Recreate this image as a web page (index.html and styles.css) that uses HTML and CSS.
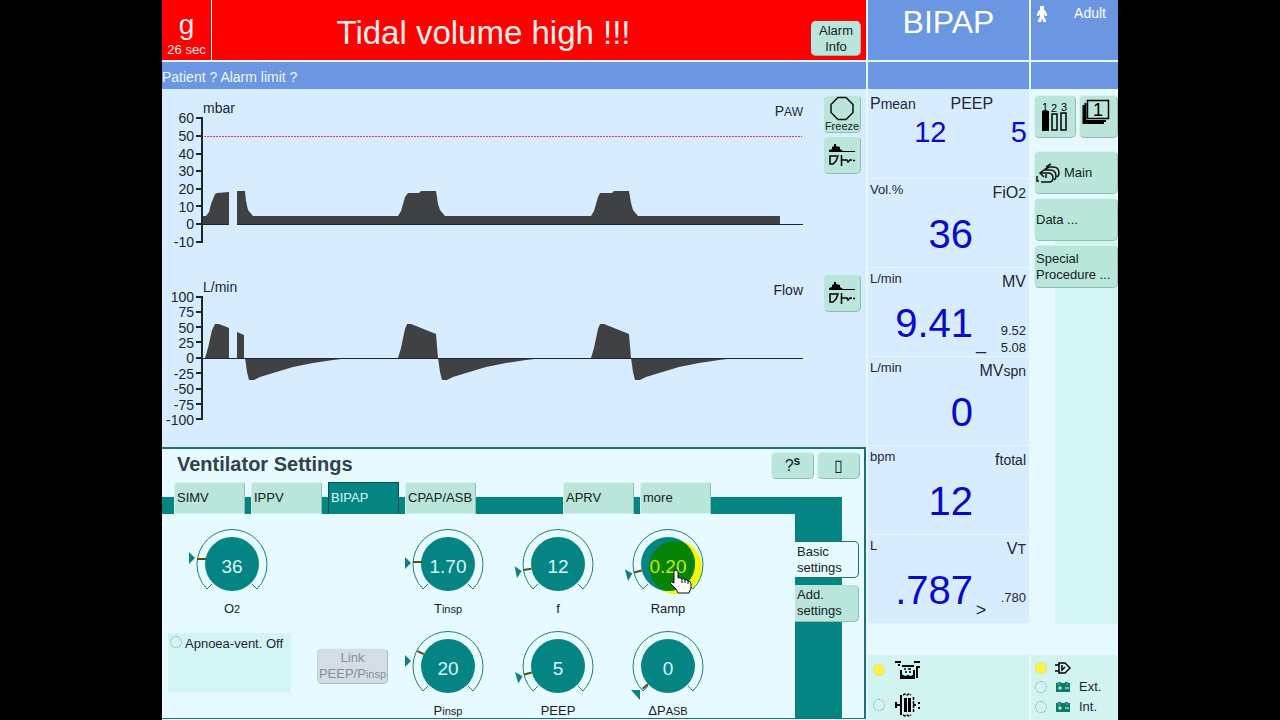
FILE: index.html
```
<!DOCTYPE html>
<html lang="en">
<head>
    <meta charset="UTF-8">
    <title>Ventilator</title>
    <link rel="stylesheet" href="styles.css">
</head>
<body>
    <!-- shared shapes -->
    <svg class="defs" width="0" height="0" aria-hidden="true">
        <symbol id="dial" viewBox="-45 -38 90 76">
            <path d="M-20 20L-25 25A35 35 0 1 1 25 25L20 20" fill="none" stroke="#1f7d7d"/>
            <circle r="27" fill="#048583"/>
        </symbol>
        <symbol id="curves" viewBox="0 0 28 26">
            <path d="M1 10V8l3-1V5l2-1V2h2v2l4 1v2l3 2v1z" fill="#000"/>
            <path d="M1 9.500h26" stroke="#000"/>
            <path d="M2 14h8l-2 5-3 3H2zM13.500 13v11M14 18h5l1 2 2-2h2M25 18.500h2" fill="none" stroke="#000" stroke-width="1.500"/>
        </symbol>
        <symbol id="battery" viewBox="0 0 16 12">
            <path d="M1 2h2V1h3v1h4V1h3v1h2v9H1z" fill="#0d7a6b"/>
            <path d="M3 7h4M5 5v4M10 7h4" stroke="#e0fff8"/>
            <path d="M3 3h2M11 3h2" stroke="#7fc5b8"/>
        </symbol>
    </svg>

    <div class="screen">
        <div class="main">
            <header class="alarm">
                <div class="timer">
                    <span class="timer-sign">g</span>
                    <span class="timer-text">26 sec</span>
                </div>
                <h1 class="message">Tidal volume high !!!</h1>
                <button class="btn alarm-info">Alarm<br>Info</button>
            </header>
            <div class="hint">Patient ? Alarm limit ?</div>

            <section class="charts">
                <div class="chart">
                    <svg class="plot" viewBox="0 0 650 179">
                        <g class="scale">
                            <text x="32" y="34">60</text>
                            <text x="32" y="52">50</text>
                            <text x="32" y="70">40</text>
                            <text x="32" y="87">30</text>
                            <text x="32" y="105">20</text>
                            <text x="32" y="123">10</text>
                            <text x="32" y="140">0</text>
                            <text x="32" y="158">-10</text>
                        </g>
                        <text class="unit" x="41" y="24">mbar</text>
                        <text class="name" x="641" y="27">P<tspan class="small">AW</tspan></text>
                        <path class="axis" d="M34 29h6v124h-6M34 47h6M34 65h6M34 82h6M34 100h6M34 117h6M34 135h6"/>
                        <path class="limit" d="M42 47.500H640"/>
                        <path class="wave" d="M41 135V127H44L47 123L49 115L53 105L55 104L67 103V135zM75 135V102H83L84 112L86 121L91 127H236L239 122L243 108L246 104H257L259 102H274L276 115L278 121L283 127H429L432 122L436 108L438 104H450L452 102H467L469 114L471 121L476 127H618V135z"/>
                        <path class="zero" d="M41 135.500H67M75 135.500H641"/>
                    </svg>
                    <div class="tools">
                        <button class="btn tool freeze">
                            <svg width="26" height="25" viewBox="0 0 26 25"><path d="M9 1.500h8l7 7v8l-7 7H9l-7-7v-8z" fill="none" stroke="#111" stroke-width="1.500"/></svg>
                            Freeze
                        </button>
                        <button class="btn tool" aria-label="Pressure curve"><svg width="28" height="26"><use href="#curves"/></svg></button>
                    </div>
                </div>
                <div class="chart">
                    <svg class="plot" viewBox="0 0 650 179">
                        <g class="scale">
                            <text x="32" y="34">100</text>
                            <text x="32" y="49">75</text>
                            <text x="32" y="65">50</text>
                            <text x="32" y="80">25</text>
                            <text x="32" y="95">0</text>
                            <text x="32" y="111">-25</text>
                            <text x="32" y="126">-50</text>
                            <text x="32" y="142">-75</text>
                            <text x="32" y="157">-100</text>
                        </g>
                        <text class="unit" x="41" y="24">L/min</text>
                        <text class="name" x="641" y="27">Flow</text>
                        <path class="axis" d="M34 29h6v122h-6M34 44h6M34 59h6M34 74h6M34 90h6M34 105h6M34 121h6M34 136h6"/>
                        <path class="wave" d="M43 90L46 80L50 62L53 56H57L67 60V90zM75 90V64L82 67V90z"/>
                        <path class="wave" d="M83 90L85 104L87 112H92L98 109L111 105L131 99L151 95L171 92L188 90z"/>
                        <path class="wave" d="M236 90L239 80L243 61L245 56H249L274 66L276 90L278 104L280 112H285L291 109L304 105L324 99L344 95L364 92L381 90z"/>
                        <path class="wave" d="M429 90L432 80L436 61L438 56H442L467 66L469 90L471 104L473 112H478L484 109L497 105L517 99L537 95L557 92L574 90z"/>
                        <path class="zero" d="M41 90.500H641"/>
                    </svg>
                    <div class="tools">
                        <button class="btn tool" aria-label="Flow curve"><svg width="28" height="26"><use href="#curves"/></svg></button>
                    </div>
                </div>
            </section>

            <section class="settings">
                <div class="settings-head">
                    <h2>Ventilator Settings</h2>
                    <button class="btn head-btn">?<sup>s</sup></button>
                    <button class="btn head-btn">▯</button>
                </div>
                <nav class="tabs">
                    <button class="tab">SIMV</button>
                    <button class="tab">IPPV</button>
                    <button class="tab active">BIPAP</button>
                    <button class="tab">CPAP/ASB</button>
                    <button class="tab after-space">APRV</button>
                    <button class="tab">more</button>
                </nav>
                <div class="settings-body">
                    <div class="knobs">
                        <button class="knob">
                            <svg viewBox="-45 -38 90 76">
                                <use href="#dial" x="-45" y="-38" width="90" height="76"/>
                                <path class="tick" d="M-35-5h9"/>
                                <path class="pointer" d="M-43-12l6 6l-6 6z"/>
                                <text y="9">36</text>
                            </svg>
                            <span>O<small>2</small></span>
                        </button>
                        <button class="knob col-3">
                            <svg viewBox="-45 -38 90 76">
                                <use href="#dial" x="-45" y="-38" width="90" height="76"/>
                                <path class="tick" d="M-35-2h9"/>
                                <path class="pointer" d="M-43-7l6 6l-6 6z"/>
                                <text y="9">1.70</text>
                            </svg>
                            <span>T<small>insp</small></span>
                        </button>
                        <button class="knob">
                            <svg viewBox="-45 -38 90 76">
                                <use href="#dial" x="-45" y="-38" width="90" height="76"/>
                                <path class="tick" d="M-35 0h8" transform="rotate(-10)"/>
                                <path class="pointer" d="M-43-6l6 6l-6 6z" transform="rotate(-11)"/>
                                <text y="9">12</text>
                            </svg>
                            <span>f</span>
                        </button>
                        <button class="knob">
                            <svg viewBox="-45 -38 90 76">
                                <clipPath id="disc"><circle r="27"/></clipPath>
                                <circle cx="7" cy="3" r="27" fill="#f4f800"/>
                                <use href="#dial" x="-45" y="-38" width="90" height="76"/>
                                <circle cx="7" cy="3" r="26" fill="#078407" clip-path="url(#disc)"/>
                                <path class="tick" d="M-35 0h8" transform="rotate(-14)"/>
                                <path class="pointer" d="M-43-6l6 6l-6 6z" transform="rotate(-15)"/>
                                <text class="lit" y="9">0.20</text>
                                <path class="hand" d="M6 7q2-2 4 0v7q2-1 4 1q2-1 3 1q2-1 3 1q3 0 3 3v4l-2 5H10l-2-4l-6-6q1-2 4 0z"/>
                                <path d="M14 15v4M17 16v3M20 17v3" stroke="#111"/>
                            </svg>
                            <span>Ramp</span>
                        </button>

                        <div class="apnoea">
                            <input type="radio" id="apnoea" class="lamp">
                            <label for="apnoea">Apnoea-vent. Off</label>
                        </div>
                        <button class="btn link" disabled>Link<br>PEEP/P<small>insp</small></button>
                        <button class="knob">
                            <svg viewBox="-45 -38 90 76">
                                <use href="#dial" x="-45" y="-38" width="90" height="76"/>
                                <path class="tick" d="M-34 0h7" transform="rotate(26)"/>
                                <path class="pointer" d="M-43-11l6 6l-6 6z"/>
                                <text y="9">20</text>
                            </svg>
                            <span>P<small>insp</small></span>
                        </button>
                        <button class="knob">
                            <svg viewBox="-45 -38 90 76">
                                <use href="#dial" x="-45" y="-38" width="90" height="76"/>
                                <path class="tick" d="M-35 0h8" transform="rotate(-14)"/>
                                <path class="pointer" d="M-43-6l6 6l-6 6z" transform="rotate(-16)"/>
                                <text y="9">5</text>
                            </svg>
                            <span>PEEP</span>
                        </button>
                        <button class="knob">
                            <svg viewBox="-45 -38 90 76">
                                <use href="#dial" x="-45" y="-38" width="90" height="76"/>
                                <path class="tick" d="M-34 0h7" transform="rotate(-42)"/>
                                <path class="pointer" d="M-37 24h9v10z"/>
                                <text y="9">0</text>
                            </svg>
                            <span>ΔP<small>ASB</small></span>
                        </button>
                    </div>
                    <div class="side-tabs">
                        <button class="side-tab active">Basic<br>settings</button>
                        <button class="side-tab">Add.<br>settings</button>
                    </div>
                </div>
            </section>
        </div>

        <div class="values">
            <div class="mode">BIPAP</div>
            <div class="strip"></div>
            <div class="pair">
                <div><span class="pair-name">P<small>mean</small></span><b>12</b></div>
                <div><span class="pair-name">PEEP</span><b class="last">5</b></div>
            </div>
            <div class="value">
                <div class="value-head"><span>Vol.%</span><em>FiO<small>2</small></em></div>
                <div class="value-row"><b>36</b><span class="mark"></span><span class="limits"></span></div>
            </div>
            <div class="value">
                <div class="value-head"><span>L/min</span><em>MV</em></div>
                <div class="value-row"><b>9.41</b><span class="mark">_</span><span class="limits">9.52<br>5.08</span></div>
            </div>
            <div class="value">
                <div class="value-head"><span>L/min</span><em>MV<small>spn</small></em></div>
                <div class="value-row"><b>0</b><span class="mark"></span><span class="limits"></span></div>
            </div>
            <div class="value">
                <div class="value-head"><span>bpm</span><em>f<small>total</small></em></div>
                <div class="value-row"><b>12</b><span class="mark"></span><span class="limits"></span></div>
            </div>
            <div class="value">
                <div class="value-head"><span>L</span><em>V<small>T</small></em></div>
                <div class="value-row"><b>.787</b><span class="mark">&gt;</span><span class="limits">.780</span></div>
            </div>
            <div class="status modules">
                <div class="status-row">
                    <i class="lamp on"></i>
                    <svg width="28" height="20" viewBox="0 0 28 20">
                        <path d="M1 2h6M20 2h6M4 5h2M23 18V7h3M8 6h12M7 10v8h13v-8" fill="none" stroke="#000" stroke-width="2"/>
                        <path d="M7 18h13v-4l-3 2l-3-1l-3 1l-4-2z"/>
                        <path d="M10 9h2M14 9h3M11 12h2M15 12h2" stroke="#000" stroke-width="1.500"/>
                    </svg>
                </div>
                <div class="status-row">
                    <i class="lamp"></i>
                    <svg width="28" height="24" viewBox="0 0 28 24">
                        <path d="M2 9v6M3 12h4M7 2v6M7 8v8M7 16v6M19 12h3M25 9v2M25 14v2" fill="none" stroke="#000" stroke-width="2"/>
                        <path d="M10 5h3v14h-3zM14 5h3v14h-3z"/>
                        <path d="M9 2l2-1l2 1l2-1l2 1M9 22l2 1l2-1l2 1l2-1M19.500 4v16" fill="none" stroke="#000" stroke-width="1.500" stroke-dasharray="3 1"/>
                    </svg>
                </div>
            </div>
        </div>

        <aside class="side">
            <div class="patient">
                <svg width="12" height="18" viewBox="0 0 12 18"><path d="M4 1h4v4h1l2 4v2H9l-1-2v3l2 3v2H7l-1-4-1 4H2v-2l2-3V9l-1 2H1V9l2-4h1z" fill="#fff"/></svg>
                <span>Adult</span>
            </div>
            <div class="strip"></div>
            <div class="menu">
                <div class="menu-top">
                    <button class="btn icon-btn" aria-label="Pages 1 2 3">
                        <svg width="28" height="30" viewBox="0 0 28 30">
                            <text x="1" y="9">1</text><text x="10" y="10">2</text><text x="20" y="9">3</text>
                            <path d="M1 9h7v20H1z"/>
                            <path d="M11 12h5v16h-5zM20 11h5v17h-5z" fill="none" stroke="#000" stroke-width="1.500"/>
                        </svg>
                    </button>
                    <button class="btn icon-btn page-btn" aria-label="Page">
                        <svg width="28" height="26" viewBox="0 0 28 26">
                            <path d="M5.500 1.500h21v18h-21z" fill="none" stroke="#000" stroke-width="1.500"/>
                            <path d="M3.500 4v18H24M1.500 6v18H22" fill="none" stroke="#000" stroke-width="2"/>
                            <text class="page-no" x="16" y="17">1</text>
                        </svg>
                    </button>
                </div>
                <button class="btn menu-btn">
                    <svg width="25" height="22" viewBox="0 0 25 22">
                        <path d="M1 14v5h2M5 20h8q4 0 4-4q0-5-5-5H5M8 8l-4 3l4 4M9 8h5q6 0 6 6q0 3-2 4M13 5L8 8M11 5h6q6 0 6 6q0 3-2 4M15 2l-5 3M10 12v4" fill="none" stroke="#111" stroke-width="1.500"/>
                    </svg>
                    Main
                </button>
                <button class="btn menu-btn">Data ...</button>
                <button class="btn menu-btn">Special<br>Procedure ...</button>
            </div>
            <div class="status power">
                <div class="status-row"><i class="lamp on"></i>
                    <svg width="16" height="12" viewBox="0 0 16 12"><path d="M0 3h4M0 9h4M4 1h6l5 5-5 5H4zM7 3v5l3-3" fill="none" stroke="#000" stroke-width="1.500"/></svg>
                </div>
                <div class="status-row"><i class="lamp"></i><svg width="16" height="12"><use href="#battery"/></svg><span>Ext.</span></div>
                <div class="status-row"><i class="lamp"></i><svg width="16" height="12"><use href="#battery"/></svg><span>Int.</span></div>
            </div>
        </aside>
    </div>
</body>
</html>
```
FILE: styles.css
```
*{
    box-sizing: border-box;
}
body{
    margin: 0;
    padding: 0 162px;
    background: #000;
    color: #1c2733;
    font-family: "Liberation Sans", Arial, sans-serif;
    font-size: 13px;
    line-height: 16px;
}
button{
    margin: 0;
    padding: 0;
    border: 0;
    background: none;
    color: #14211f;
    font: inherit;
}
h1, h2{
    margin: 0;
}
.defs{
    position: absolute;
}
.screen{
    display: grid;
    grid-template-columns: minmax(0, 1fr) 161px 87px;
    column-gap: 2px;
    min-height: 100vh;
    background: #e6f9ff;
}
.main, .values, .side{
    display: flex;
    flex-direction: column;
}
.btn{
    background: #b9e5da;
    border: 1px solid #d4f3ec;
    border-right-color: #8fbdb4;
    border-bottom-color: #8fbdb4;
    border-radius: 5px;
}

/* top line */
.alarm{
    display: flex;
    height: 60px;
    background: #fe0000;
    color: #ffeeea;
}
.timer{
    display: flex;
    flex-direction: column;
    align-items: center;
    justify-content: flex-end;
    width: 50px;
    padding-bottom: 2px;
    border-right: 1px solid #fff;
}
.timer-sign{
    font-size: 28px;
    line-height: 34px;
}
.message{
    flex: 1;
    padding: 14px 56px 0 0;
    font-size: 33px;
    font-weight: normal;
    line-height: 38px;
    text-align: center;
}
.alarm-info{
    width: 50px;
    height: 35px;
    margin: 21px 5px 0 0;
}
.hint, .strip{
    height: 27px;
    margin-top: 2px;
    background: #6a96e2;
}
.hint{
    color: #eef6ff;
    font-size: 14px;
    line-height: 31px;
}
.mode, .patient{
    height: 60px;
    background: #6a96e2;
    color: #fff;
}
.mode{
    font-size: 32px;
    line-height: 44px;
    text-align: center;
}
.patient{
    display: flex;
    align-items: flex-start;
    justify-content: space-between;
    padding: 5px 12px 0 5px;
    font-size: 14px;
}

/* curves */
.charts{
    flex: 1;
    background: #d8ecff;
}
.chart{
    display: flex;
    justify-content: space-between;
    height: 179px;
}
.plot{
    flex: 0 1 650px;
    min-width: 0;
}
.plot text{
    fill: #1c2733;
    font-size: 14px;
}
.plot .scale, .plot .name{
    text-anchor: end;
}
.plot .small{
    font-size: 12px;
}
.axis{
    fill: none;
    stroke: #1c2733;
    stroke-width: 2;
}
.limit{
    stroke: #dc3c5a;
    stroke-dasharray: 2 1;
}
.wave{
    fill: #3f4143;
}
.zero{
    stroke: #1c2733;
}
.tools{
    display: flex;
    flex-direction: column;
    gap: 3px;
    padding: 6px 5px 0 0;
}
.tool{
    display: flex;
    align-items: center;
    justify-content: center;
    width: 38px;
    height: 38px;
}
.freeze{
    flex-direction: column;
    font-size: 11px;
    line-height: 11px;
}

/* settings */
.settings{
    margin-bottom: 1px;
    border: 1px solid #206f72;
    border-width: 2px 2px 1px 0;
    background: #e6faff;
}
.settings-head{
    display: flex;
    gap: 3px;
    height: 33px;
    padding: 3px 4px 0 15px;
}
.settings-head h2{
    flex: 1;
    color: #33424a;
    font-size: 20px;
    line-height: 24px;
}
.head-btn{
    width: 43px;
    height: 27px;
    font-size: 16px;
}
.head-btn sup{
    font-size: 12px;
    font-weight: bold;
    line-height: 1px;
}
.tabs{
    display: flex;
    gap: 6px;
    margin-right: 22px;
    padding-left: 12px;
    background: linear-gradient(transparent 15px, #048583 15px);
}
.tab{
    width: 71px;
    height: 32px;
    padding-left: 2px;
    border: 1px solid #d4f3ec;
    border-right-color: #8fbdb4;
    border-radius: 3px 3px 0 0;
    background: #b9e5da;
    text-align: left;
}
.tab.active{
    border: 1px solid #0a4f50;
    border-bottom-color: #048583;
    border-radius: 0;
    background: #048583;
    color: #d8fff8;
}
.after-space{
    margin-left: 81px;
}
.settings-body{
    display: grid;
    grid-template-columns: minmax(0, 1fr) 69px;
}
.knobs{
    display: grid;
    grid-template-columns: 140px 91px 110px 110px 110px;
    row-gap: 12px;
    padding-top: 12px;
}
.knob{
    display: flex;
    flex-direction: column;
    align-items: center;
    line-height: 14px;
}
.col-3{
    grid-column: 3;
}
.knob svg{
    width: 90px;
    height: 76px;
}
.knob text{
    fill: #d8f6f4;
    font-size: 19px;
    text-anchor: middle;
}
.knob .lit{
    fill: #b9ee00;
}
.tick{
    stroke: #57500a;
    stroke-width: 2;
}
.pointer{
    fill: #107f80;
}
.hand{
    fill: #fff;
    stroke: #111;
}
small{
    font-size: 11px;
}
.apnoea{
    display: flex;
    align-items: flex-start;
    gap: 3px;
    height: 59px;
    margin: 5px 11px 0 6px;
    padding: 3px 0 0 2px;
    background: #d2f4f2;
    white-space: nowrap;
}
.lamp{
    appearance: none;
    flex: none;
    width: 12px;
    height: 12px;
    margin: 0;
    border: 1px dotted #6f9d98;
    border-radius: 50%;
}
.lamp.on{
    border-color: #d8d860;
    background: #fbf24a;
}
.link{
    width: 71px;
    height: 36px;
    margin: 20px 0 0 15px;
    border-color: #e8eef2 #a9b4ba #a9b4ba #c5cfd5;
    background: #d5dde4;
    color: #858e95;
    white-space: nowrap;
}
.side-tabs{
    display: flex;
    flex-direction: column;
    gap: 7px;
    padding-top: 27px;
    background: linear-gradient(to right, #048583 47px, transparent 47px);
}
.side-tab{
    width: 64px;
    height: 37px;
    padding-left: 2px;
    border: 1px solid #8fbdb4;
    border-width: 0 1px 1px 0;
    border-radius: 0 5px 5px 0;
    background: #b9e5da;
    text-align: left;
}
.side-tab.active{
    border-color: #206f72;
    border-top-width: 1px;
    background: #e6faff;
}

/* measured values */
.pair, .value{
    background: #d8ecff;
    border-bottom: 1px solid #e6f6ff;
}
.pair{
    display: grid;
    grid-template-columns: 1fr 1fr;
    height: 90px;
}
.pair div{
    padding: 6px 2px 0 2px;
}
.pair-name{
    display: block;
    font-size: 16px;
    line-height: 18px;
}
.pair-name small{
    font-size: 14px;
}
.pair b{
    display: block;
    color: #0a0acd;
    font-size: 29px;
    font-weight: normal;
    line-height: 38px;
    text-align: right;
}
.value{
    height: 89px;
}
.value-head{
    display: flex;
    justify-content: space-between;
    height: 26px;
    padding: 3px 3px 0 2px;
}
.value-head em{
    font-size: 16px;
    font-style: normal;
    line-height: 22px;
}
.value-head small{
    font-size: 14px;
}
.value-row{
    display: flex;
    align-items: flex-end;
    height: 62px;
    padding-right: 3px;
}
.value-row b{
    flex: 1;
    align-self: flex-start;
    color: #0a0acd;
    font-size: 40px;
    font-weight: normal;
    line-height: 58px;
    text-align: right;
}
.mark{
    width: 16px;
    font-size: 18px;
    line-height: 26px;
    text-align: center;
}
.limits{
    width: 37px;
    height: 34px;
    line-height: 17px;
    text-align: right;
}

/* right column */
.menu{
    display: flex;
    flex-direction: column;
    gap: 4px;
    height: 535px;
    padding: 6px 0 0 3px;
    background: linear-gradient(#d2f4f2, #d2f4f2) 24px 151px no-repeat;
}
.menu-top{
    display: grid;
    grid-template-columns: 42px 1fr;
    gap: 3px;
    margin-bottom: 9px;
}
.icon-btn{
    display: flex;
    align-items: center;
    justify-content: center;
    height: 43px;
}
.page-btn{
    align-items: flex-start;
    justify-content: flex-start;
    padding: 3px 2px;
}
.icon-btn text{
    font-size: 11px;
}
.icon-btn .page-no{
    font-size: 18px;
    text-anchor: middle;
}
.menu-btn{
    display: flex;
    align-items: center;
    gap: 3px;
    height: 43px;
    padding-left: 1px;
    text-align: left;
}
.status{
    display: flex;
    flex-direction: column;
    height: 65px;
    margin-top: auto;
    background: #d2f4f0;
}
.status-row{
    display: flex;
    align-items: center;
}
.modules{
    gap: 14px;
    padding: 4px 5px;
}
.modules .status-row{
    gap: 9px;
    height: 22px;
}
.power{
    gap: 4px;
    padding: 5px 4px;
}
.power .status-row{
    gap: 8px;
    height: 17px;
}
```
